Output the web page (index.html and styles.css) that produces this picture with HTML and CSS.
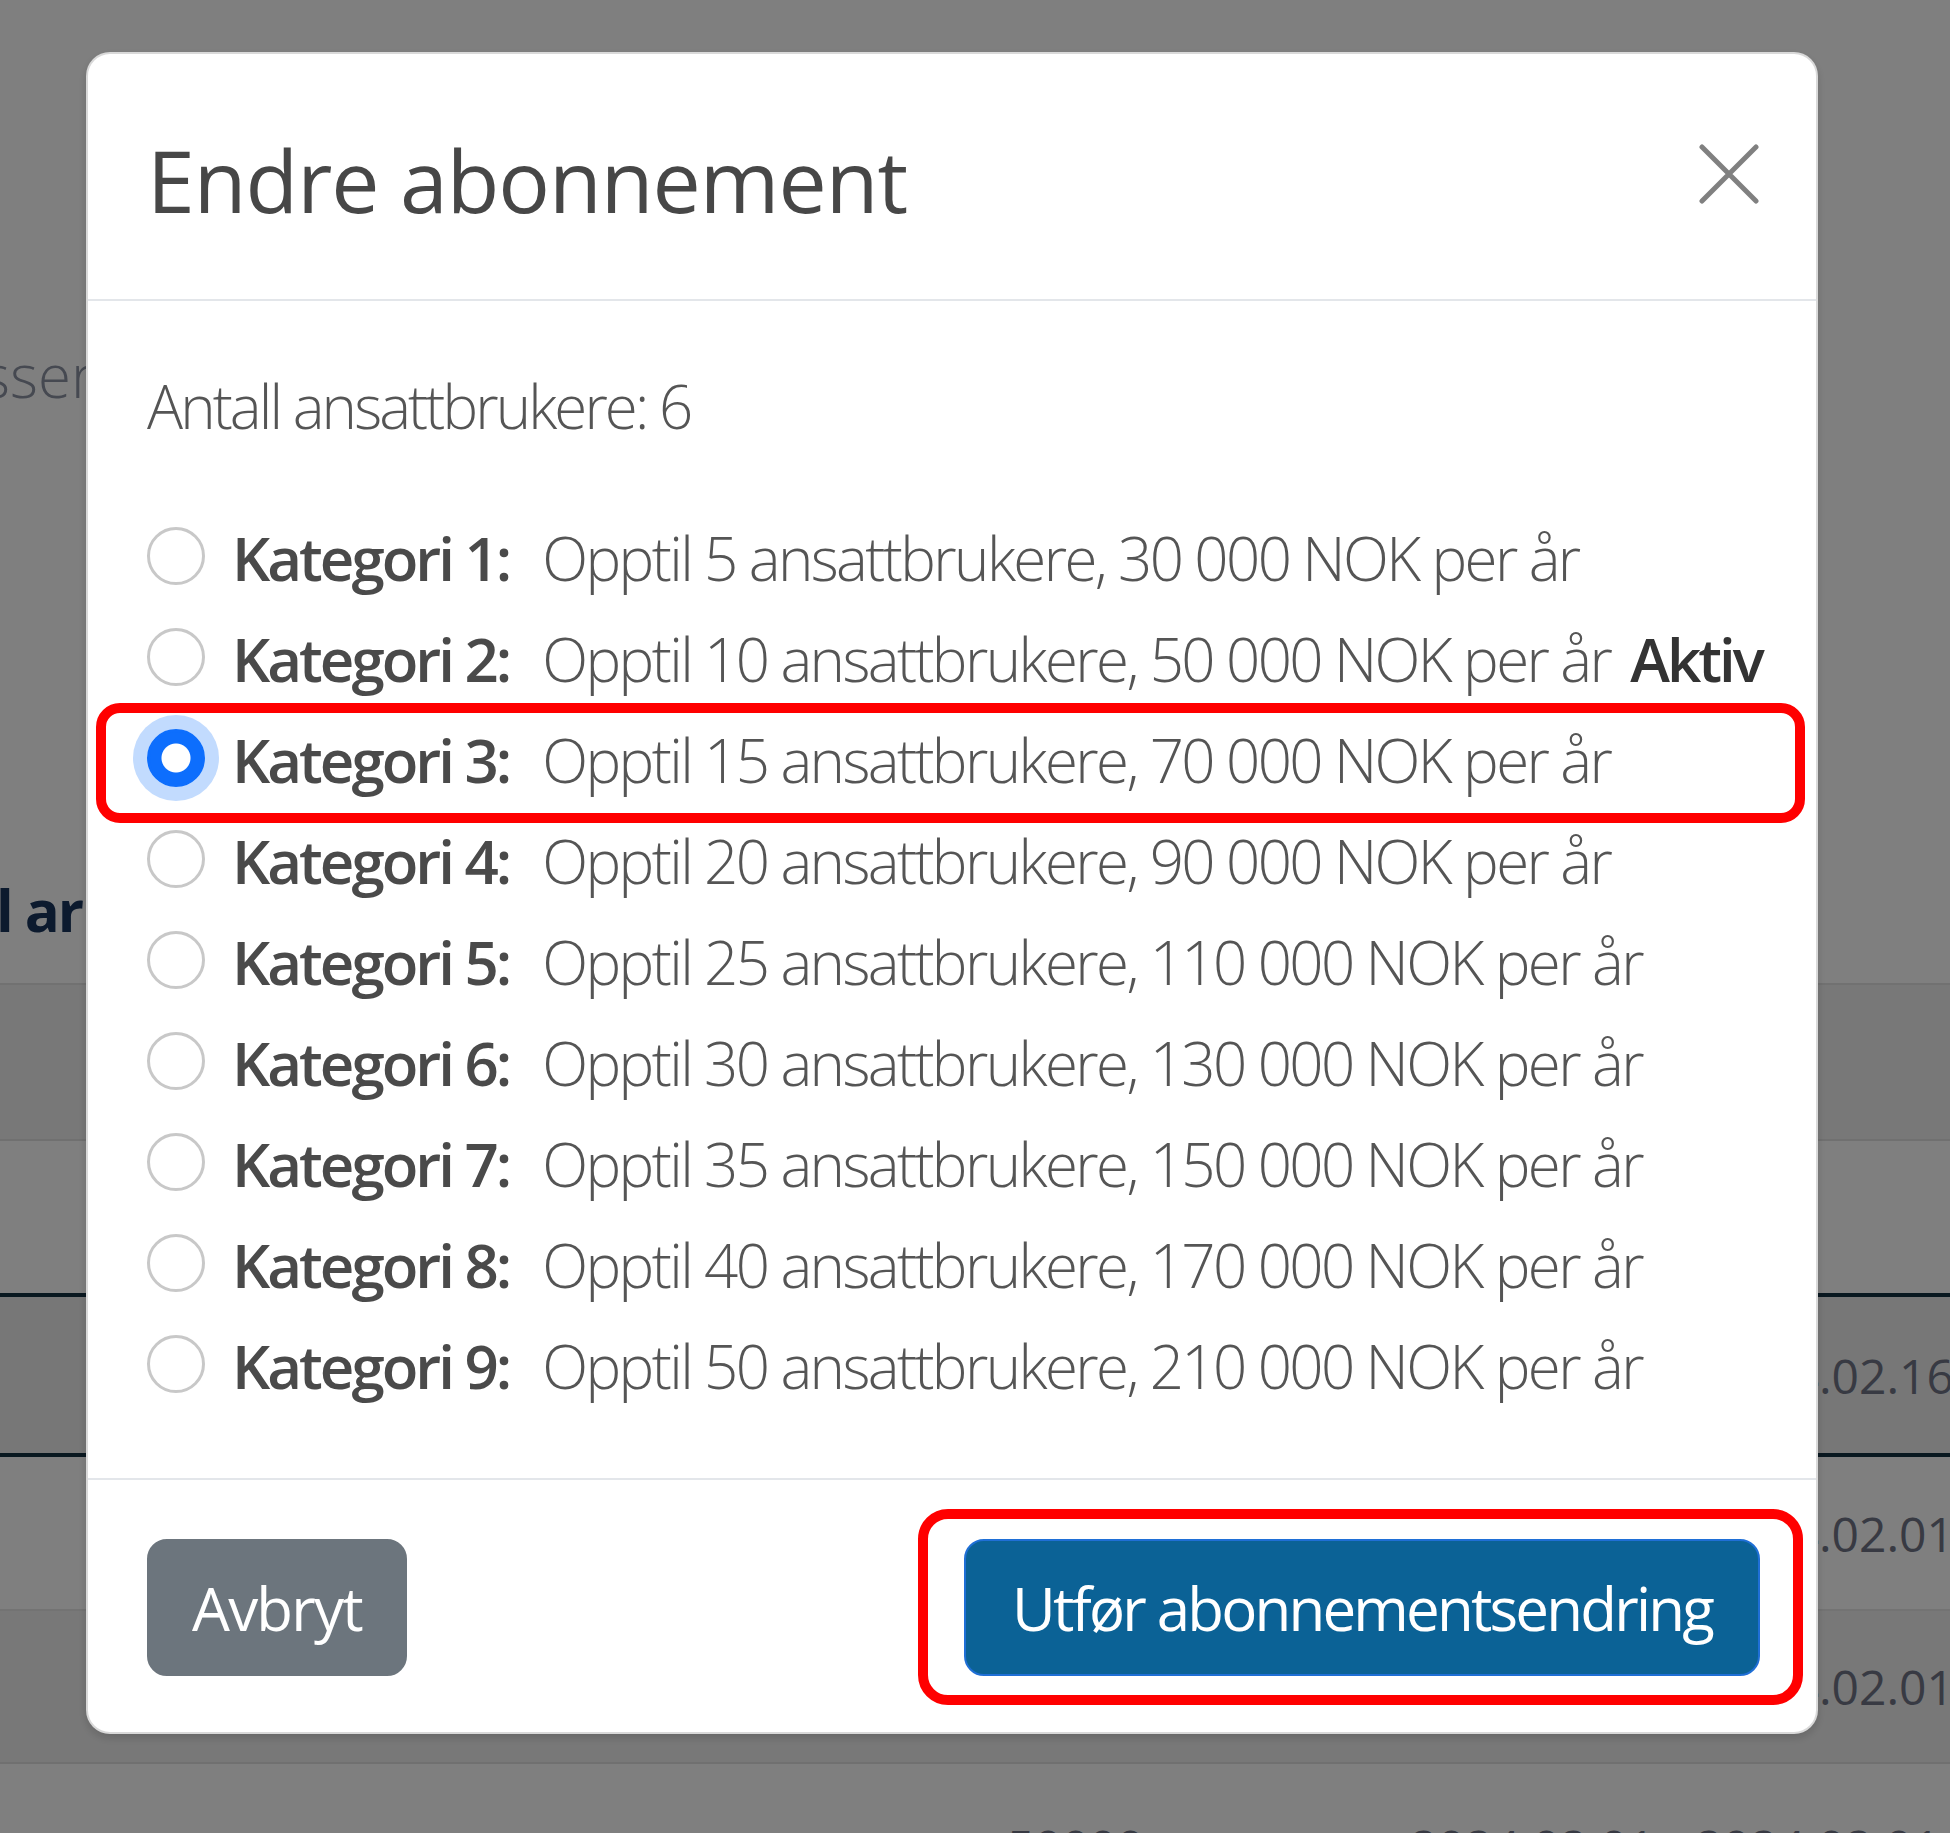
FILE: index.html
```html
<!DOCTYPE html>
<html lang="no">
<head>
<meta charset="utf-8">
<title>Endre abonnement</title>
<link rel="stylesheet" href="styles.css">
</head>
<body>
<div class="page">
  <p class="addr">Adresser</p>
  <h3 class="section-title">Antall arbeidstakere</h3>
  <table class="grid">
    <tr class="head"><td></td></tr>
    <tr class="plain"><td></td></tr>
    <tr class="active"><td><span class="date">2024.02.16 - 2024.02.16</span></td></tr>
    <tr class="plain"><td><span class="date">2024.02.01 - 2024.02.01</span></td></tr>
    <tr class="shade"><td><span class="date">2024.02.01 - 2024.02.01</span></td></tr>
    <tr class="plain last"><td><span class="amount">50000</span><span class="date">2024.02.01 - 2024.02.01</span></td></tr>
  </table>
</div>
<div class="backdrop"></div>
<div class="modal">
  <div class="modal-header">
    <h5 class="modal-title">Endre abonnement</h5>
    <button class="btn-close" type="button" aria-label="Lukk">
      <svg viewBox="0 0 60 60" width="60" height="60"><path d="M3 3 L57 57 M57 3 L3 57" stroke="#808080" stroke-width="5" stroke-linecap="round" fill="none"/></svg>
    </button>
  </div>
  <div class="modal-body">
    <p class="count">Antall ansattbrukere: 6</p>
    <div class="options">
      <label class="opt"><input class="radio" type="radio" name="kat"><strong>Kategori 1:</strong><span class="desc">Opptil 5 ansattbrukere, 30 000 NOK per år</span></label>
      <label class="opt"><input class="radio" type="radio" name="kat"><strong>Kategori 2:</strong><span class="desc">Opptil 10 ansattbrukere, 50 000 NOK per år</span><strong class="active-tag">Aktiv</strong></label>
      <label class="opt"><input class="radio" type="radio" name="kat" checked><strong>Kategori 3:</strong><span class="desc">Opptil 15 ansattbrukere, 70 000 NOK per år</span></label>
      <label class="opt"><input class="radio" type="radio" name="kat"><strong>Kategori 4:</strong><span class="desc">Opptil 20 ansattbrukere, 90 000 NOK per år</span></label>
      <label class="opt"><input class="radio" type="radio" name="kat"><strong>Kategori 5:</strong><span class="desc">Opptil 25 ansattbrukere, 110 000 NOK per år</span></label>
      <label class="opt"><input class="radio" type="radio" name="kat"><strong>Kategori 6:</strong><span class="desc">Opptil 30 ansattbrukere, 130 000 NOK per år</span></label>
      <label class="opt"><input class="radio" type="radio" name="kat"><strong>Kategori 7:</strong><span class="desc">Opptil 35 ansattbrukere, 150 000 NOK per år</span></label>
      <label class="opt"><input class="radio" type="radio" name="kat"><strong>Kategori 8:</strong><span class="desc">Opptil 40 ansattbrukere, 170 000 NOK per år</span></label>
      <label class="opt"><input class="radio" type="radio" name="kat"><strong>Kategori 9:</strong><span class="desc">Opptil 50 ansattbrukere, 210 000 NOK per år</span></label>
    </div>
  </div>
  <div class="modal-footer">
    <button class="btn btn-secondary" type="button">Avbryt</button>
    <button class="btn btn-primary" type="button">Utfør abonnementsendring</button>
  </div>
  <div class="mark mark-row"></div>
  <div class="mark mark-btn"></div>
</div>
</body>
</html>
```
FILE: styles.css
```css
html, body {
  margin: 0;
  padding: 0;
}
body {
  width: 1950px;
  height: 1833px;
  overflow: hidden;
  background: #ffffff;
  font-family: "Open Sans", "Noto Sans", sans-serif;
}

/* underlying page */
.page {
  height: 1833px;
  overflow: hidden;
}
.addr {
  margin: 0 0 0 -146px;
  padding-top: 340px;
  font-family: "Open Sans", sans-serif;
  font-weight: 300;
  font-size: 60px;
  line-height: 70px;
  color: #8c93a3;
  white-space: nowrap;
}
.section-title {
  margin: 0 0 0 -150px;
  padding-top: 465px;
  font-family: "Open Sans", sans-serif;
  font-size: 58px;
  line-height: 70px;
  font-weight: 700;
  letter-spacing: -2px;
  color: #18345c;
  white-space: nowrap;
}
.grid {
  margin-top: 38px;
  width: 100%;
  border-collapse: collapse;
  border-top: 2px solid #e2e2e2;
}
.grid td {
  padding: 0;
  font-family: "Open Sans", sans-serif;
  font-size: 48px;
  color: #707586;
  white-space: nowrap;
}
.grid tr.head td { height: 154px; background: #f0f0f0; border-bottom: 2px solid #e0e0e0; }
.grid tr.plain td { height: 152px; background: #ffffff; border-bottom: 2px solid #e6e6e6; }
.grid tr.active td { height: 156px; background: #efefef; border-top: 4px solid #133040; border-bottom: 4px solid #133040; }
.grid tr.shade td { height: 151px; background: #f1f1f1; border-bottom: 2px solid #e0e0e0; }
.grid tr.last td { height: 120px; vertical-align: top; padding-top: 50px; }
.date {
  display: inline-block;
  margin-left: 1424px;
}
.amount {
  display: inline-block;
  margin-left: 1007px;
}
.grid tr.last .date { margin-left: 266px; }

.backdrop {
  position: fixed;
  inset: 0;
  background: rgba(0, 0, 0, 0.5);
}

/* modal */
.modal {
  position: fixed;
  left: 86px;
  top: 52px;
  width: 1732px;
  box-sizing: border-box;
  background: #fff;
  border: 2px solid rgba(0, 0, 0, 0.15);
  border-radius: 24px;
  box-shadow: 0 4px 8px rgba(0, 0, 0, 0.15);
  color: #555;
}
.modal-header {
  display: flex;
  align-items: flex-start;
  padding: 74px 57px 68px 59px;
  border-bottom: 2px solid #e3e6ea;
}
.modal-title {
  margin: 0;
  font-size: 86px;
  line-height: 103px;
  font-weight: 500;
  letter-spacing: -1px;
  color: #474747;
}
.btn-close {
  margin-left: auto;
  margin-top: 16px;
  width: 60px;
  height: 60px;
  padding: 0;
  border: 0;
  background: none;
}
.btn-close svg { display: block; }

.modal-body {
  padding: 55px 59px 61px 59px;
}
.count {
  margin: 0 0 51px 0;
  font-size: 60px;
  line-height: 101px;
  font-weight: 300;
  letter-spacing: -2.9px;
  color: #555;
}
.options {
  display: flex;
  flex-direction: column;
}
.opt {
  display: flex;
  align-items: center;
  height: 101px;
  font-size: 60px;
  line-height: 101px;
  white-space: nowrap;
}
.radio {
  appearance: none;
  -webkit-appearance: none;
  margin: -5px 27px 0 0;
  width: 58px;
  height: 58px;
  flex: none;
  box-sizing: border-box;
  border: 3px solid #c8c8c8;
  border-radius: 50%;
  background: #fff;
}
.radio:checked {
  border-color: #0d6efd;
  background: radial-gradient(circle, #fff 0 14px, #0d6efd 15px);
  box-shadow: 0 0 0 14px rgba(13, 110, 253, 0.25);
}
.opt strong {
  font-weight: 600;
  letter-spacing: -3px;
  color: #4a4a4a;
  margin-right: 33px;
}
.desc {
  font-weight: 300;
  letter-spacing: -2.6px;
  color: #555;
}
.opt .active-tag {
  margin-left: 20px;
  margin-right: 0;
  color: #333;
}

.modal-footer {
  display: flex;
  justify-content: space-between;
  align-items: center;
  padding: 59px 56px 56px 59px;
  border-top: 2px solid #e3e6ea;
}
.btn {
  height: 137px;
  box-sizing: border-box;
  padding: 0 46px;
  font-family: "Open Sans", sans-serif;
  font-size: 60px;
  font-weight: 400;
  color: #fff;
  border-radius: 20px;
  border: 2px solid transparent;
}
.btn-secondary {
  padding: 0 43px;
  background: #6c757d;
  border-color: #6c757d;
  letter-spacing: -1.8px;
}
.btn-primary {
  background: #0b6296;
  border-color: #1f6fd6;
  letter-spacing: -2.8px;
}

/* annotation marks */
.mark {
  position: absolute;
  box-sizing: border-box;
  border: 10px solid #ff0000;
  pointer-events: none;
}
.mark-row {
  left: 8px;
  top: 649px;
  width: 1709px;
  height: 120px;
  border-radius: 24px;
}
.mark-btn {
  left: 830px;
  top: 1455px;
  width: 885px;
  height: 196px;
  border-radius: 30px;
}
```
